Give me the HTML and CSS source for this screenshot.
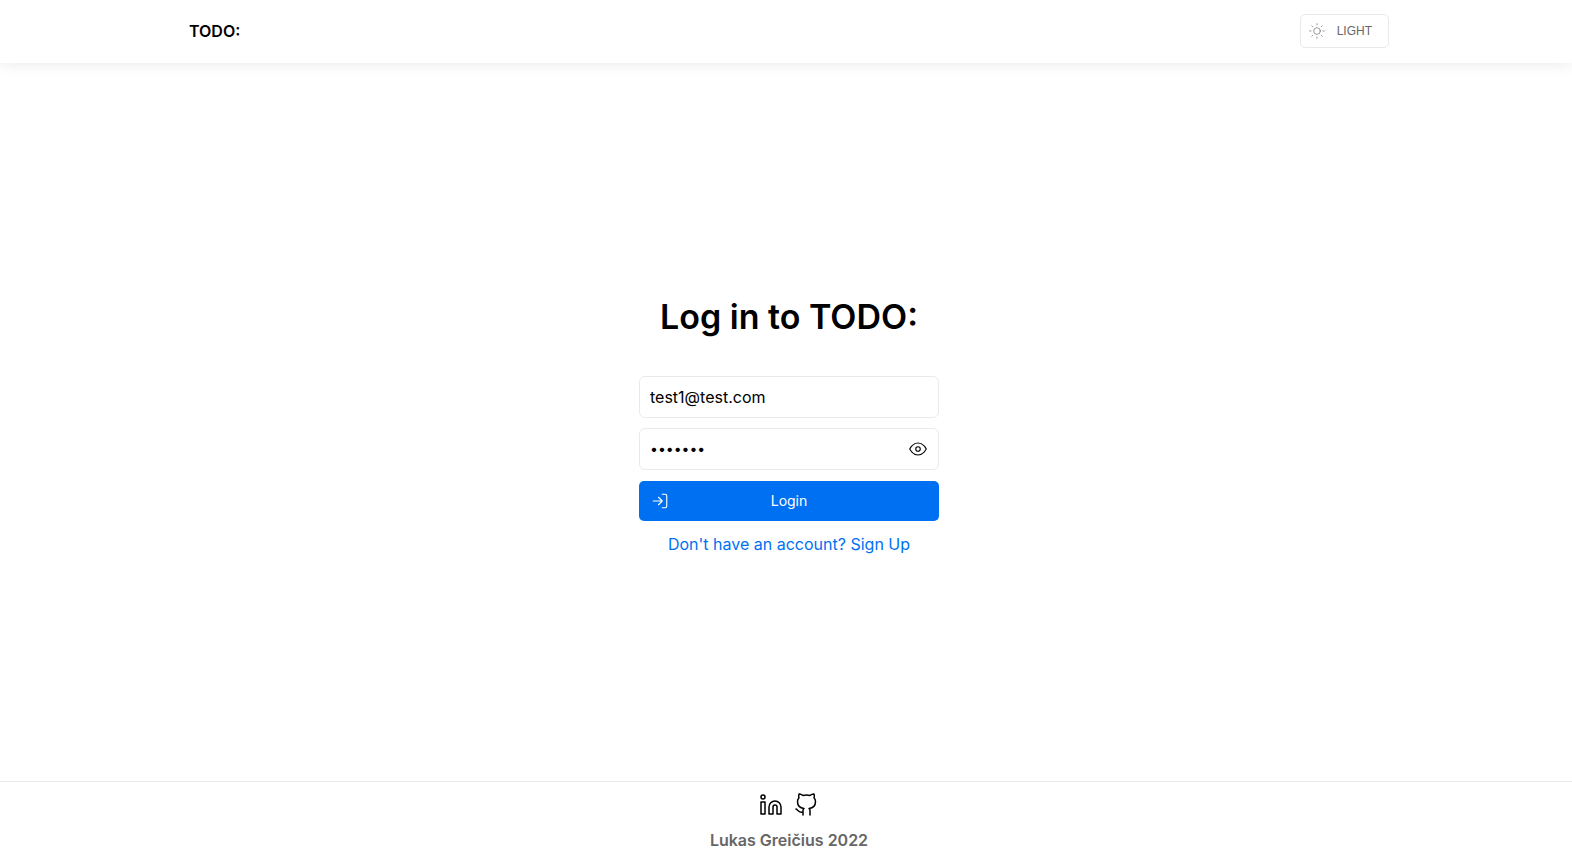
FILE: index.html
```html
<!DOCTYPE html>
<html lang="en">
<head>
<meta charset="utf-8">
<meta name="viewport" content="width=device-width, initial-scale=1">
<title>TODO: Log in</title>
<link rel="stylesheet" href="styles.css">
</head>
<body>
<header class="header">
  <div class="header-inner">
    <a class="brand" href="#">TODO:</a>
    <button class="theme" type="button">
      <svg class="icon theme-icon" viewBox="0 0 24 24" aria-hidden="true"><circle cx="12" cy="12" r="5"/><path d="M12 1v2M12 21v2M4.22 4.22l1.42 1.42M18.36 18.36l1.42 1.42M1 12h2M21 12h2M4.22 19.78l1.42-1.42M18.36 5.64l1.42-1.42"/></svg>
      <span class="theme-label">LIGHT</span>
    </button>
  </div>
</header>
<main class="main">
  <h1 class="title">Log in to TODO:</h1>
  <form class="form">
    <div class="field">
      <input class="input" type="email" aria-label="Email" value="test1@test.com">
    </div>
    <div class="field">
      <input class="input input-password" type="password" aria-label="Password" value="testing">
      <button class="reveal" type="button" aria-label="Show password">
        <svg class="icon reveal-icon" viewBox="0 0 24 24" aria-hidden="true"><path d="M1 12s4-8 11-8 11 8 11 8-4 8-11 8-11-8-11-8z"/><circle cx="12" cy="12" r="3"/></svg>
      </button>
    </div>
    <button class="login" type="button">
      <svg class="icon login-icon" viewBox="0 0 24 24" aria-hidden="true"><path d="M15 3h4a2 2 0 0 1 2 2v14a2 2 0 0 1-2 2h-4M10 17l5-5-5-5M13.8 12H3"/></svg>
      <span class="login-label">Login</span>
    </button>
  </form>
  <a class="signup" href="#">Don't have an account? Sign Up</a>
</main>
<footer class="footer">
  <div class="social">
    <a class="social-link" href="#" aria-label="LinkedIn"><svg class="icon social-icon" viewBox="0 0 24 24" aria-hidden="true"><path d="M16 8a6 6 0 0 1 6 6v7h-4v-7a2 2 0 0 0-4 0v7h-4v-7a6 6 0 0 1 6-6zM2 9h4v12H2z"/><circle cx="4" cy="4" r="2"/></svg></a>
    <a class="social-link" href="#" aria-label="GitHub"><svg class="icon social-icon" viewBox="0 0 24 24" aria-hidden="true"><path d="M8 19c-4 1.500-5-2.500-7-3m14 6v-3.870a3.370 3.370 0 0 0-.94-2.610c3.140-.35 6.440-1.540 6.440-7A5.440 5.440 0 0 0 19 4.770 5.070 5.070 0 0 0 18.910 1S17.730.65 15 2.480a13.380 13.380 0 0 0-7 0C5.270.65 4.090 1 4.090 1A5.070 5.070 0 0 0 4 4.770a5.440 5.440 0 0 0-1.500 3.780c0 5.420 3.300 6.610 6.440 7A3.370 3.370 0 0 0 8 18.130V22"/></svg></a>
  </div>
  <p class="credit">Lukas Greičius 2022</p>
</footer>
</body>
</html>
```
FILE: styles.css
```css
* { box-sizing: border-box; }
body {
  margin: 0;
  min-height: 100vh;
  display: flex;
  flex-direction: column;
  background: #fff;
  color: #000;
  font-family: Inter, "Liberation Sans", sans-serif;
  font-size: 16px;
  line-height: 24px;
}
a { text-decoration: none; }
button, input { font: inherit; }
.icon {
  display: block;
  fill: none;
  stroke: currentColor;
  stroke-width: 1.5;
  stroke-linecap: round;
  stroke-linejoin: round;
}
.header {
  padding: 14px 0 15px 6px;
  box-shadow: 0 0 15px rgba(0, 0, 0, 0.1);
}
.header-inner {
  max-width: 1200px;
  margin: 0 auto;
  display: flex;
  align-items: center;
  justify-content: space-between;
}
.brand { color: #000; font-weight: 600; }
.theme {
  display: flex;
  align-items: center;
  height: 34px;
  padding: 0 16px 0 8px;
  gap: 12px;
  border: 1px solid #eaeaea;
  border-radius: 5px;
  background: #fff;
  color: #666;
  font-family: "Liberation Sans", Arial, sans-serif;
  font-size: 12px;
}
.theme-icon { width: 16px; height: 16px; stroke-width: 1; }
.main {
  flex: 1;
  display: flex;
  flex-direction: column;
  align-items: center;
  justify-content: center;
  padding: 2px 0 0 6px;
}
.title {
  margin: 0 0 32px;
  font-size: 34px;
  line-height: 54px;
  font-weight: 600;
}
.form {
  width: 300px;
  max-width: 100%;
  display: flex;
  flex-direction: column;
  gap: 10px;
}
.field {
  display: flex;
  height: 42px;
  border: 1px solid #eaeaea;
  border-radius: 6px;
}
.input {
  flex: 1;
  min-width: 0;
  padding: 0 10px;
  border: 0;
  outline: 0;
  background: transparent;
  color: #000;
}
.input-password { font-size: 14px; }
.reveal {
  width: 40px;
  padding: 0 0 0 11px;
  border: 0;
  background: transparent;
  color: #000;
}
.reveal-icon { width: 18px; height: 18px; }
.login {
  display: grid;
  grid-template-columns: 18px 1fr 18px;
  align-items: center;
  height: 40px;
  margin-top: 1px;
  padding: 0 12px;
  border: 0;
  border-radius: 5px;
  background: #0070f3;
  color: #fff;
  font-size: 14px;
}
.login-icon { width: 18px; height: 18px; }
.signup { margin-top: 11px; color: #0070f3; }
.footer {
  display: flex;
  flex-direction: column;
  align-items: center;
  padding: 11px 0 6px 6px;
  border-top: 1px solid #eaeaea;
}
.social { display: flex; gap: 12px; }
.social-link { color: #000; }
.social-icon { width: 24px; height: 24px; }
.credit { margin: 11px 0 0; color: #666; font-weight: 600; }
```
